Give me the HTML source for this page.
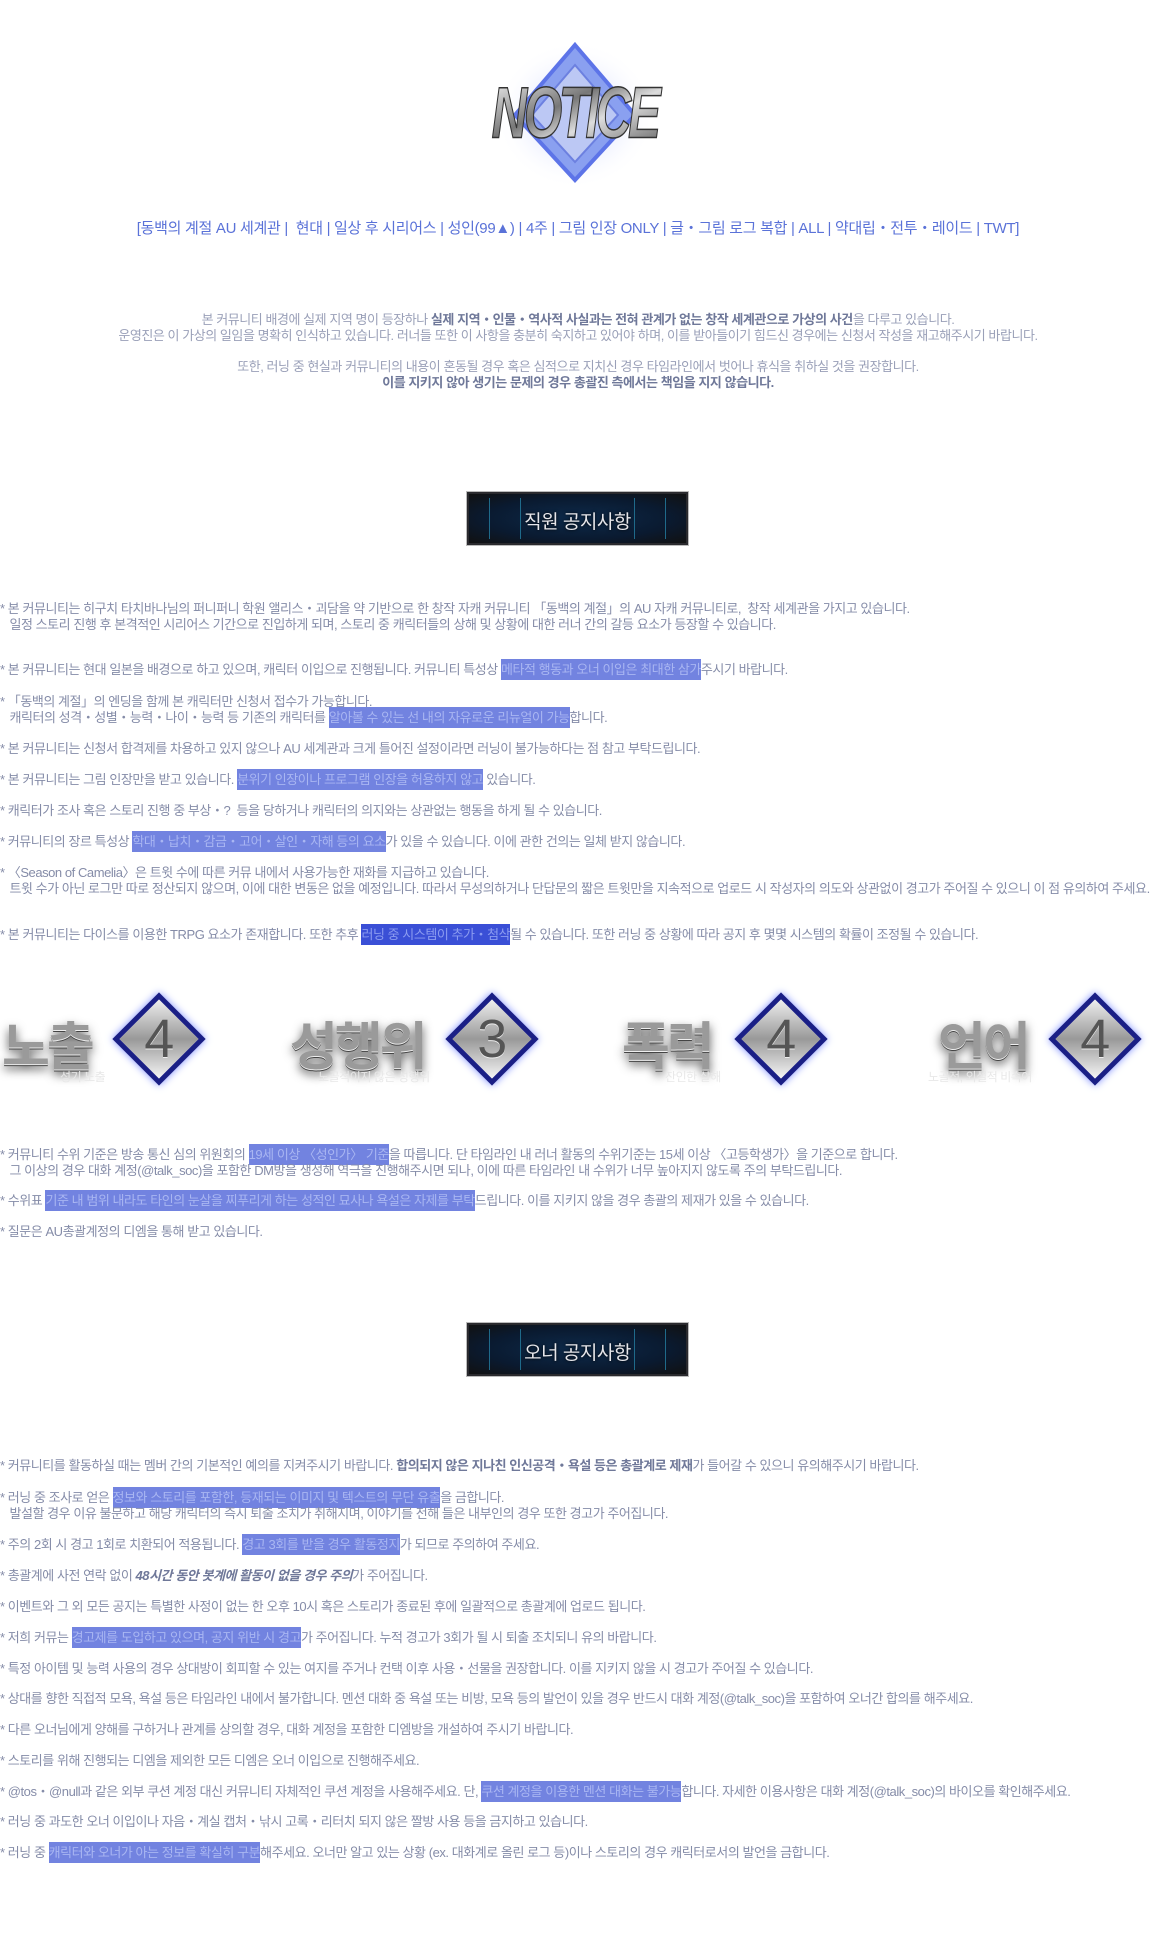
<!DOCTYPE html>
<html><head><meta charset="utf-8">
<style>
*{margin:0;padding:0;box-sizing:border-box}
body{width:1156px;height:1940px;background:#fff;position:relative;overflow:hidden;font-family:"Liberation Sans","Noto Sans CJK KR",sans-serif;color:#858ca8;font-size:13px;letter-spacing:-0.45px}
.l{position:absolute;left:0;white-space:nowrap;line-height:17px}
.c{position:absolute;left:0;width:1156px;text-align:center;white-space:nowrap;line-height:17px}
.h{background:#7283e0;color:#a9b6f2;padding:3px 0}
.hd{background:#3a4fd6;color:#8c9cf0;padding:3px 0}
b{color:#6f7899}
.badge{position:absolute;left:467px;width:221px;height:53px;background:radial-gradient(ellipse at center,#0d2a4a 0%,#0a1a30 60%,#111 100%);border:2px solid #2a2a2e;box-shadow:0 0 0 1px #bbb}
.badge span{position:absolute;left:0;right:0;top:13px;text-align:center;color:#e6e6ea;font-size:19px;letter-spacing:-0.5px;text-shadow:0 0 3px #000}
.badge:before,.badge:after{content:"";position:absolute;top:4px;bottom:4px;width:30px;border:1px solid #1f6a8a;border-top:none;border-bottom:none}
.badge:before{left:20px}.badge:after{right:20px}
.rt{position:absolute;font-size:52px;font-weight:bold;color:#9a9a9a;text-shadow:0 1px 0 #eee,0 2px 0 #444,0 5px 10px #555;letter-spacing:-3px}
.dm{position:absolute;width:66px;height:66px;transform:rotate(45deg);background:linear-gradient(135deg,#eee,#999 50%,#f5f5f5);border:5px solid #1a1f86;box-shadow:0 0 8px #7f8fff}
.dn{position:absolute;width:92px;text-align:center;font-size:54px;color:#555;font-family:"Liberation Sans Narrow","Liberation Sans",sans-serif;text-shadow:0 1px 0 #eee}
.sub{position:absolute;font-size:12px;color:#e8e8e8;white-space:nowrap}
</style></head><body>

<svg style="position:absolute;left:470px;top:40px" width="210" height="150" viewBox="0 0 210 150">
<defs><radialGradient id="g" cx="50%" cy="50%" r="50%"><stop offset="0" stop-color="#aab8ff" stop-opacity=".9"/><stop offset="1" stop-color="#fff" stop-opacity="0"/></radialGradient>
<linearGradient id="m" x1="0" y1="0" x2="1" y2="1"><stop offset="0" stop-color="#fff"/><stop offset=".4" stop-color="#777"/><stop offset=".6" stop-color="#ddd"/><stop offset="1" stop-color="#555"/></linearGradient></defs>
<ellipse cx="105" cy="75" rx="80" ry="74" fill="url(#g)"/>
<polygon points="105,5 165,75 105,140 45,75" fill="#8aa0f0" stroke="#5d74e8" stroke-width="4"/>
<polygon points="105,25 148,75 105,122 62,75" fill="#bcc8f4" stroke="#6c80e0" stroke-width="2"/>
<text x="105" y="100" text-anchor="middle" font-family="Liberation Sans" font-weight="bold" font-style="italic" font-size="58" fill="url(#m)" stroke="#333" stroke-width="1.2" letter-spacing="-4" transform="scale(0.85,1.25) translate(18,-22)">NOTICE</text>
</svg>

<div class="c" style="top:220px;color:#5a72d8;font-size:15px;letter-spacing:-0.3px">[동백의 계절 AU 세계관 |&nbsp; 현대 | 일상 후 시리어스 | 성인(99▲) | 4주 | 그림 인장 ONLY | 글・그림 로그 복합 | ALL | 약대립・전투・레이드 | TWT]</div>

<div class="c" style="top:311px;color:#9aa0b8">본 커뮤니티 배경에 실제 지역 명이 등장하나 <b>실제 지역・인물・역사적 사실과는 전혀 관계가 없는 창작 세계관으로 가상의 사건</b>을 다루고 있습니다.</div>
<div class="c" style="top:327px;color:#9aa0b8">운영진은 이 가상의 일임을 명확히 인식하고 있습니다. 러너들 또한 이 사항을 충분히 숙지하고 있어야 하며, 이를 받아들이기 힘드신 경우에는 신청서 작성을 재고해주시기 바랍니다.</div>
<div class="c" style="top:358px;color:#9aa0b8">또한, 러닝 중 현실과 커뮤니티의 내용이 혼동될 경우 혹은 심적으로 지치신 경우 타임라인에서 벗어나 휴식을 취하실 것을 권장합니다.</div>
<div class="c" style="top:374px"><b>이를 지키지 않아 생기는 문제의 경우 총괄진 측에서는 책임을 지지 않습니다.</b></div>

<div class="badge" style="top:492px"><span>직원 공지사항</span></div>

<div class="l" style="top:600px">* 본 커뮤니티는 히구치 타치바나님의 퍼니퍼니 학원 앨리스・괴담을 약 기반으로 한 창작 자캐 커뮤니티 「동백의 계절」의 AU 자캐 커뮤니티로,&nbsp; 창작 세계관을 가지고 있습니다.</div>
<div class="l" style="top:616px">&nbsp;&nbsp; 일정 스토리 진행 후 본격적인 시리어스 기간으로 진입하게 되며, 스토리 중 캐릭터들의 상해 및 상황에 대한 러너 간의 갈등 요소가 등장할 수 있습니다.</div>
<div class="l" style="top:661px">* 본 커뮤니티는 현대 일본을 배경으로 하고 있으며, 캐릭터 이입으로 진행됩니다. 커뮤니티 특성상 <span class="h">메타적 행동과 오너 이입은 최대한 삼가</span>주시기 바랍니다.</div>
<div class="l" style="top:693px">* 「동백의 계절」의 엔딩을 함께 본 캐릭터만 신청서 접수가 가능합니다.</div>
<div class="l" style="top:709px">&nbsp;&nbsp; 캐릭터의 성격・성별・능력・나이・능력 등 기존의 캐릭터를 <span class="h">알아볼 수 있는 선 내의 자유로운 리뉴얼이 가능</span>합니다.</div>
<div class="l" style="top:740px">* 본 커뮤니티는 신청서 합격제를 차용하고 있지 않으나 AU 세계관과 크게 틀어진 설정이라면 러닝이 불가능하다는 점 참고 부탁드립니다.</div>
<div class="l" style="top:771px">* 본 커뮤니티는 그림 인장만을 받고 있습니다. <span class="h">분위기 인장이나 프로그램 인장을 허용하지 않고</span> 있습니다.</div>
<div class="l" style="top:802px">* 캐릭터가 조사 혹은 스토리 진행 중 부상・?&nbsp; 등을 당하거나 캐릭터의 의지와는 상관없는 행동을 하게 될 수 있습니다.</div>
<div class="l" style="top:833px">* 커뮤니티의 장르 특성상 <span class="h">학대・납치・감금・고어・살인・자해 등의 요소</span>가 있을 수 있습니다. 이에 관한 건의는 일체 받지 않습니다.</div>
<div class="l" style="top:864px">* 〈Season of Camelia〉은 트윗 수에 따른 커뮤 내에서 사용가능한 재화를 지급하고 있습니다.</div>
<div class="l" style="top:880px">&nbsp;&nbsp; 트윗 수가 아닌 로그만 따로 정산되지 않으며, 이에 대한 변동은 없을 예정입니다. 따라서 무성의하거나 단답문의 짧은 트윗만을 지속적으로 업로드 시 작성자의 의도와 상관없이 경고가 주어질 수 있으니 이 점 유의하여 주세요.</div>
<div class="l" style="top:926px">* 본 커뮤니티는 다이스를 이용한 TRPG 요소가 존재합니다. 또한 추후 <span class="hd">러닝 중 시스템이 추가・첨삭</span>될 수 있습니다. 또한 러닝 중 상황에 따라 공지 후 몇몇 시스템의 확률이 조정될 수 있습니다.</div>

<div class="rt" style="left:2px;top:1005px">노출</div>
<div class="sub" style="left:60px;top:1068px">성기 노출</div>
<div class="dm" style="left:126px;top:1006px"></div><div class="dn" style="left:113px;top:1008px">4</div>

<div class="rt" style="left:290px;top:1005px">성행위</div>
<div class="sub" style="left:318px;top:1068px">노골적이지 않은 성행위</div>
<div class="dm" style="left:459px;top:1006px"></div><div class="dn" style="left:446px;top:1008px">3</div>

<div class="rt" style="left:622px;top:1005px">폭력</div>
<div class="sub" style="left:665px;top:1068px">잔인한 살해</div>
<div class="dm" style="left:748px;top:1006px"></div><div class="dn" style="left:735px;top:1008px">4</div>

<div class="rt" style="left:938px;top:1005px">언어</div>
<div class="sub" style="left:928px;top:1068px">노골적, 외설적 비속어</div>
<div class="dm" style="left:1062px;top:1006px"></div><div class="dn" style="left:1049px;top:1008px">4</div>

<div class="l" style="top:1146px">* 커뮤니티 수위 기준은 방송 통신 심의 위원회의 <span class="h">19세 이상 〈성인가〉 기준</span>을 따릅니다. 단 타임라인 내 러너 활동의 수위기준는 15세 이상 〈고등학생가〉을 기준으로 합니다.</div>
<div class="l" style="top:1162px">&nbsp;&nbsp; 그 이상의 경우 대화 계정(@talk_soc)을 포함한 DM방을 생성해 역극을 진행해주시면 되나, 이에 따른 타임라인 내 수위가 너무 높아지지 않도록 주의 부탁드립니다.</div>
<div class="l" style="top:1192px">* 수위표 <span class="h">기준 내 범위 내라도 타인의 눈살을 찌푸리게 하는 성적인 묘사나 욕설은 자제를 부탁</span>드립니다. 이를 지키지 않을 경우 총괄의 제재가 있을 수 있습니다.</div>
<div class="l" style="top:1223px">* 질문은 AU총괄계정의 디엠을 통해 받고 있습니다.</div>

<div class="badge" style="top:1323px"><span>오너 공지사항</span></div>

<div class="l" style="top:1457px">* 커뮤니티를 활동하실 때는 멤버 간의 기본적인 예의를 지켜주시기 바랍니다. <b>합의되지 않은 지나친 인신공격・욕설 등은 총괄계로 제재</b>가 들어갈 수 있으니 유의해주시기 바랍니다.</div>
<div class="l" style="top:1489px">* 러닝 중 조사로 얻은 <span class="h">정보와 스토리를 포함한, 등재되는 이미지 및 텍스트의 무단 유출</span>을 금합니다.</div>
<div class="l" style="top:1505px">&nbsp;&nbsp; 발설할 경우 이유 불문하고 해당 캐릭터의 즉시 퇴출 조치가 취해지며, 이야기를 전해 들은 내부인의 경우 또한 경고가 주어집니다.</div>
<div class="l" style="top:1536px">* 주의 2회 시 경고 1회로 치환되어 적용됩니다. <span class="h">경고 3회를 받을 경우 활동정지</span>가 되므로 주의하여 주세요.</div>
<div class="l" style="top:1567px">* 총괄계에 사전 연락 없이 <b><i>48시간 동안 봇계에 활동이 없을 경우 주의</i></b>가 주어집니다.</div>
<div class="l" style="top:1598px">* 이벤트와 그 외 모든 공지는 특별한 사정이 없는 한 오후 10시 혹은 스토리가 종료된 후에 일괄적으로 총괄계에 업로드 됩니다.</div>
<div class="l" style="top:1629px">* 저희 커뮤는 <span class="h">경고제를 도입하고 있으며, 공지 위반 시 경고</span>가 주어집니다. 누적 경고가 3회가 될 시 퇴출 조치되니 유의 바랍니다.</div>
<div class="l" style="top:1660px">* 특정 아이템 및 능력 사용의 경우 상대방이 회피할 수 있는 여지를 주거나 컨택 이후 사용・선물을 권장합니다. 이를 지키지 않을 시 경고가 주어질 수 있습니다.</div>
<div class="l" style="top:1690px">* 상대를 향한 직접적 모욕, 욕설 등은 타임라인 내에서 불가합니다. 멘션 대화 중 욕설 또는 비방, 모욕 등의 발언이 있을 경우 반드시 대화 계정(@talk_soc)을 포함하여 오너간 합의를 해주세요.</div>
<div class="l" style="top:1721px">* 다른 오너님에게 양해를 구하거나 관계를 상의할 경우, 대화 계정을 포함한 디엠방을 개설하여 주시기 바랍니다.</div>
<div class="l" style="top:1752px">* 스토리를 위해 진행되는 디엠을 제외한 모든 디엠은 오너 이입으로 진행해주세요.</div>
<div class="l" style="top:1783px">* @tos・@null과 같은 외부 쿠션 계정 대신 커뮤니티 자체적인 쿠션 계정을 사용해주세요. 단, <span class="h">쿠션 계정을 이용한 멘션 대화는 불가능</span>합니다. 자세한 이용사항은 대화 계정(@talk_soc)의 바이오를 확인해주세요.</div>
<div class="l" style="top:1813px">* 러닝 중 과도한 오너 이입이나 자음・계실 캡처・낚시 고록・리터치 되지 않은 짤방 사용 등을 금지하고 있습니다.</div>
<div class="l" style="top:1844px">* 러닝 중 <span class="h">캐릭터와 오너가 아는 정보를 확실히 구분</span>해주세요. 오너만 알고 있는 상황 (ex. 대화계로 올린 로그 등)이나 스토리의 경우 캐릭터로서의 발언을 금합니다.</div>

</body></html>
